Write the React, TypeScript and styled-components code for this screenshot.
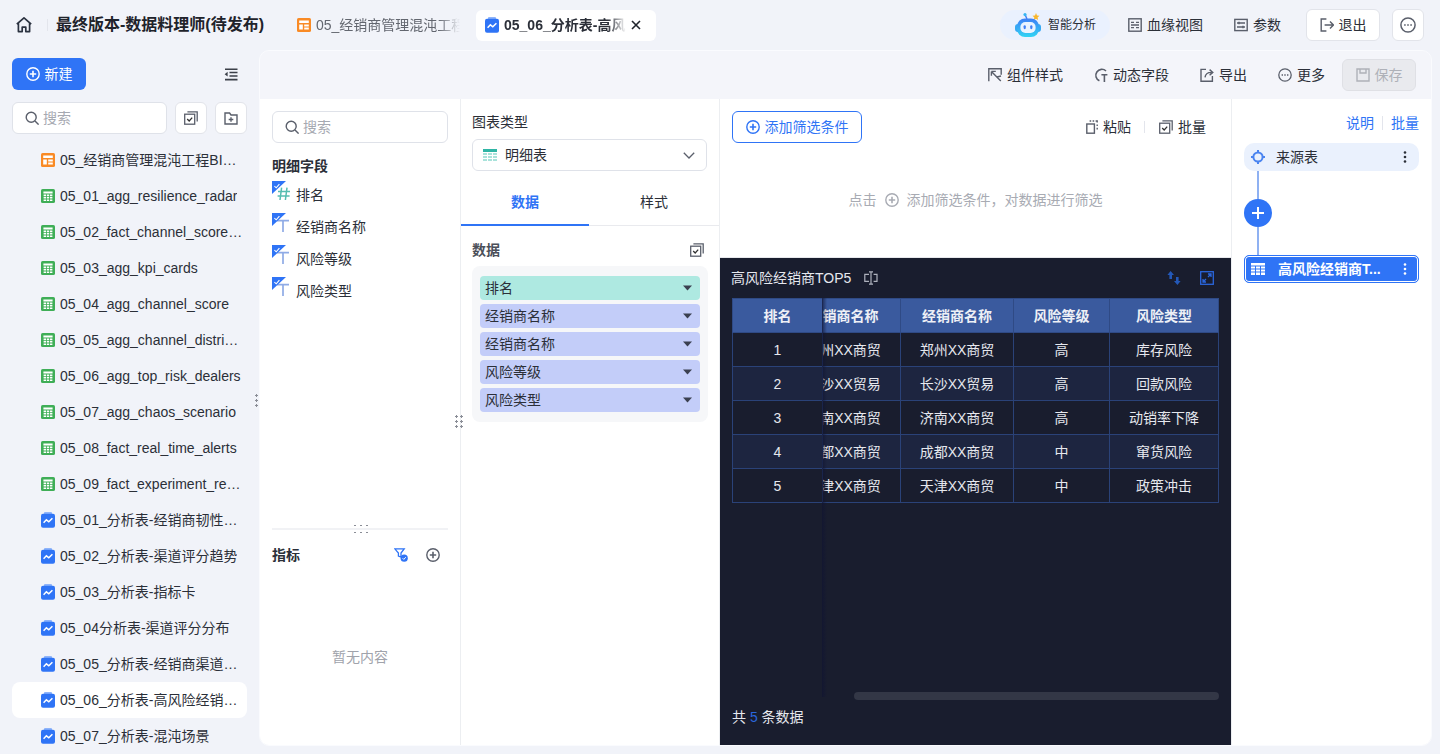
import React from "react";
import styled, { createGlobalStyle } from "styled-components";

const BLUE = "#2f74f6";

const GlobalStyle = createGlobalStyle`
  html, body {
    margin: 0;
    padding: 0;
    height: 754px;
    overflow: hidden;
    background: #f1f3f9;
    font-family: "Liberation Sans", "Noto Sans CJK SC", sans-serif;
    font-size: 14px;
    line-height: 20px;
    color: #2b2f38;
  }
  * { box-sizing: border-box; }
`;

/* ---------- icons ---------- */

type IconProps = { size?: number; color?: string };

const Line: React.FC<IconProps & { children: React.ReactNode }> = ({ size = 14, color = "#5a5f6b", children }) => (
  <svg width={size} height={size} viewBox={`0 0 ${size} ${size}`} fill="none" stroke={color} strokeWidth="1.4" style={{ flexShrink: 0 }}>
    {children}
  </svg>
);

const HomeIcon = () => (
  <svg width="18" height="18" viewBox="0 0 18 18" fill="none" stroke="#2b3240" strokeWidth="1.7" strokeLinejoin="round" style={{ flexShrink: 0 }}>
    <path d="M1.8 8.2 9 1.8l7.2 6.4M3.4 7v8.6h3.8v-4.4h3.6v4.4h3.8V7" />
  </svg>
);

const DashboardIcon = () => (
  <svg width="14" height="14" viewBox="0 0 14 14" style={{ flexShrink: 0 }}>
    <rect width="14" height="14" rx="1.6" fill="#f98a25" />
    <path d="M2.2 2.4h9.6v2.6H2.2zM2.2 6.4h3.6v5.2H2.2zM7.2 6.4h4.6v2H7.2zM7.2 9.6h4.6v2H7.2z" fill="#fff" />
  </svg>
);

const SheetIcon = () => (
  <svg width="14" height="14" viewBox="0 0 14 14" style={{ flexShrink: 0 }}>
    <rect width="14" height="14" rx="1.6" fill="#3fae57" />
    <path d="M2.4 2.4h9.2v2H2.4zM2.6 5.6h2.4v1.6H2.6zM5.8 5.6h2.4v1.6H5.8zM9 5.6h2.4v1.6H9zM2.6 8h2.4v1.6H2.6zM5.8 8h2.4v1.6H5.8zM9 8h2.4v1.6H9zM2.6 10.4h2.4V12H2.6zM5.8 10.4h2.4V12H5.8zM9 10.4h2.4V12H9z" fill="#fff" />
  </svg>
);

const AnalysisIcon = () => (
  <svg width="14" height="16" viewBox="0 0 14 16" style={{ flexShrink: 0 }}>
    <rect x="3" y="0" width="8" height="3" rx="1" fill="#8fb4fa" />
    <rect y="1.8" width="14" height="14" rx="2" fill={BLUE} />
    <path d="M2.6 10.8 5.4 7.8l2.4 2 3.6-3.6" fill="none" stroke="#fff" strokeWidth="1.5" />
  </svg>
);

const SearchIcon = () => (
  <Line>
    <circle cx="6.2" cy="6.2" r="5" />
    <path d="m10 10 3.6 3.6" />
  </Line>
);

const PlusCircle: React.FC<IconProps> = ({ size = 14, color = "#5a5f6b" }) => (
  <svg width={size} height={size} viewBox="0 0 14 14" fill="none" stroke={color} strokeWidth="1.4" style={{ flexShrink: 0 }}>
    <circle cx="7" cy="7" r="6.2" />
    <path d="M7 3.8v6.4M3.8 7h6.4" strokeWidth="1.6" />
  </svg>
);

const BatchIcon: React.FC<IconProps> = ({ size = 14 }) => (
  <svg width={size} height={size} viewBox="0 0 14 14" fill="none" stroke="#5a5f6b" strokeWidth="1.3" style={{ flexShrink: 0 }}>
    <rect x="0.7" y="3.2" width="10" height="10" />
    <path d="M3.4.8h9.8v9.6" />
    <path d="m3.2 8 2 2 3-3.4" stroke="#333" />
  </svg>
);

const FolderPlusIcon = () => (
  <Line>
    <path d="M1 2h4.6l1.4 2h6v9H1z" />
    <path d="M7 6.2v4.6M4.7 8.5h4.6" />
  </Line>
);

const CollapseIcon = () => (
  <svg width="14" height="13" viewBox="0 0 14 13" fill="none" stroke="#3b3f48" strokeWidth="1.6">
    <path d="M1 1.2h12.5M5.5 4.5h8M5.5 8h8M1 11.6h12.5" />
    <path d="M3.6 3.8v4.6L.6 6.2z" fill="#3b3f48" stroke="none" />
  </svg>
);

const CloseIcon = () => (
  <svg width="10" height="10" viewBox="0 0 10 10" stroke="#20242c" strokeWidth="1.6" style={{ flexShrink: 0 }}>
    <path d="m1 1 8 8M9 1 1 9" />
  </svg>
);

const RobotIcon = () => (
  <svg width="28" height="26" viewBox="0 0 28 26" style={{ flexShrink: 0 }}>
    <defs>
      <linearGradient id="robot" x1="0" y1="0" x2="0" y2="1">
        <stop offset="0" stopColor="#3f7ff6" />
        <stop offset="1" stopColor="#2fd4f4" />
      </linearGradient>
    </defs>
    <path d="M13 7 11.4 3.4" stroke="#3f7ff6" strokeWidth="1.4" fill="none" />
    <circle cx="11" cy="2.6" r="1.6" fill="#36b5f2" />
    <path d="m22 1 1 2.4 2.5.4-1.9 1.7.5 2.6-2.1-1.3-2.2 1.3.5-2.6-1.8-1.7 2.5-.4z" fill="#f9b62c" />
    <rect x="1" y="12" width="26" height="8" rx="3" fill="#35a9f4" />
    <rect x="3" y="6.4" width="22" height="18.6" rx="8" fill="url(#robot)" />
    <rect x="6.4" y="10" width="15.2" height="11" rx="5" fill="#eaf3ff" />
    <rect x="9.6" y="13.2" width="2.2" height="4" rx="1.1" fill="#3f7ff6" />
    <rect x="16.2" y="13.2" width="2.2" height="4" rx="1.1" fill="#3f7ff6" />
  </svg>
);

const LineageIcon = () => (
  <Line>
    <rect x=".8" y=".8" width="12.4" height="12.4" />
    <path d="M3 4.4h3M3 9.6h3M8 4.4h3M8 9.6h3M3 7h8" />
  </Line>
);

const ParamIcon = () => (
  <Line>
    <rect x=".8" y="1.4" width="12.4" height="11.2" />
    <path d="M3 5h8M3 9h8" />
    <path d="M5 3.8v2.4M9 7.8v2.4" />
  </Line>
);

const ExitIcon = () => (
  <Line>
    <path d="M6.4 1H1.2v12h5.2M4.6 7h8.6M10 3.6 13.4 7 10 10.4" />
  </Line>
);

const DotsCircle: React.FC<IconProps> = ({ size = 14 }) => (
  <svg width={size} height={size} viewBox="0 0 14 14" fill="none" stroke="#5a5f6b" strokeWidth="1.3" style={{ flexShrink: 0 }}>
    <circle cx="7" cy="7" r="6.2" />
    <path d="M3.6 7h1.4M6.3 7h1.4M9 7h1.4" strokeWidth="1.5" />
  </svg>
);

const StyleIcon = () => (
  <Line>
    <path d="M.8 13.2V.8h12.4v6" />
    <path d="M3.4 3.4 12.8 13M3.4 3.4h4.4M3.4 3.4v4.4" />
    <path d="M13 8 9 9" />
  </Line>
);

const DynamicIcon = () => (
  <Line>
    <path d="M12 3A6 6 0 1 0 5.4 12.8" strokeWidth="1.6" />
    <path d="M7.4 6.8h6M10.4 6.8V14" strokeWidth="1.6" />
  </Line>
);

const ExportIcon = () => (
  <Line>
    <path d="M6 1.4H1v11.8h11.4V8" />
    <path d="M5 9.4c.4-3.4 2.6-5 6.4-5M9.6 1.6l3.2 2.8-3.2 2.8" />
  </Line>
);

const SaveIcon = () => (
  <Line color="#aeb1b8">
    <path d="M1 1h12v12H1z" />
    <path d="M4 1v4h6V1" />
  </Line>
);

const PasteIcon = () => (
  <svg width="12" height="14" viewBox="0 0 12 14" fill="none" stroke="#5a5f6b" strokeWidth="1.4" style={{ flexShrink: 0 }}>
    <rect x=".8" y="4" width="7.6" height="9.2" />
    <path d="M3.6 1h1.6M6.6 1h1.6M9.6 1h1.6v1.6M11.2 4.4v1.6M11.2 7.8v1.6" />
  </svg>
);

const TableTypeIcon = () => (
  <svg width="14" height="12" viewBox="0 0 14 12" style={{ flexShrink: 0 }}>
    <rect width="14" height="3" fill="#2fb5a5" />
    <path d="M0 4h4v2H0zM5 4h4v2H5zM10 4h4v2h-4zM0 7h4v2H0zM5 7h4v2H5zM10 7h4v2h-4zM0 10h4v2H0zM5 10h4v2H5zM10 10h4v2h-4z" fill="#a9e3db" />
  </svg>
);

const ChevronIcon = () => (
  <svg width="12" height="7" viewBox="0 0 12 7" fill="none" stroke="#5a5f6b" strokeWidth="1.3">
    <path d="m.8.8 5.2 5.2L11.2.8" />
  </svg>
);

const Caret = () => (
  <svg width="9" height="6" viewBox="0 0 9 6" style={{ flexShrink: 0 }}>
    <path d="M0 .4h9L4.5 5.6z" fill="#3b4050" />
  </svg>
);

const FilterCheckIcon = () => (
  <svg width="14" height="14" viewBox="0 0 14 14" style={{ flexShrink: 0 }}>
    <path d="M.8.8h9.4L7 5v4L4.4 8V5z" fill="none" stroke={BLUE} strokeWidth="1.3" />
    <circle cx="10.2" cy="10.2" r="3.6" fill={BLUE} />
    <path d="m8.6 10.2 1.2 1.2 2-2.2" stroke="#fff" fill="none" strokeWidth="1" />
  </svg>
);

const RenameIcon = () => (
  <svg width="14" height="14" viewBox="0 0 14 14" fill="none" stroke="#aeb2bd" strokeWidth="1.2">
    <path d="M5 3.4H.8v7H5M9.6 3.4h3.4v7H9.6M5 .8h4M5 13.2h4M7 .8v12.4" />
  </svg>
);

const SwapIcon = () => (
  <svg width="14" height="14" viewBox="0 0 14 14" fill="#2358b8">
    <path d="M3.6 0 7 4H5v4H2.4V4H.4zM10.4 14 7 10h2V6h2.6v4h2z" />
  </svg>
);

const ExpandIcon = () => (
  <svg width="14" height="14" viewBox="0 0 14 14" fill="none" stroke="#2a66dc" strokeWidth="1.3">
    <rect x=".7" y=".7" width="12.6" height="12.6" />
    <path d="M8 3h3v3M11 3 8 6M6 11H3V8M3 11l3-3" />
  </svg>
);

const SourceIcon = () => (
  <svg width="14" height="14" viewBox="0 0 14 14" fill="none" stroke="#4a84f0" strokeWidth="2" style={{ flexShrink: 0 }}>
    <circle cx="7" cy="7" r="4.6" />
    <path d="M7 0v3M7 11v3M0 7h3M11 7h3" />
  </svg>
);

const WhiteTableIcon = () => (
  <svg width="14" height="12" viewBox="0 0 14 12" fill="#fff" style={{ flexShrink: 0 }}>
    <path d="M0 0h14v2.6H0zM0 3.6h4v2H0zM5 3.6h4v2H5zM10 3.6h4v2h-4zM0 6.6h4v2H0zM5 6.6h4v2H5zM10 6.6h4v2h-4zM0 9.6h4V12H0zM5 9.6h4V12H5zM10 9.6h4V12h-4z" />
  </svg>
);

const Kebab: React.FC<{ color: string }> = ({ color }) => (
  <svg width="4" height="12" viewBox="0 0 4 12" fill={color} style={{ flexShrink: 0 }}>
    <circle cx="2" cy="1.5" r="1.3" />
    <circle cx="2" cy="6" r="1.3" />
    <circle cx="2" cy="10.5" r="1.3" />
  </svg>
);

const FieldMark: React.FC<{ kind: "number" | "text" }> = ({ kind }) => (
  <svg width="18" height="20" viewBox="0 0 18 20" style={{ flexShrink: 0 }}>
    {kind === "number" ? (
      <path d="M9.6 6.6 8 19M15 6.6 13.4 19M6 10.6h12M5.6 15h12" stroke="#56bdb0" strokeWidth="1.5" fill="none" />
    ) : (
      <path d="M5 7.6h12M11 7.6V19" stroke="#8fabe6" strokeWidth="1.7" fill="none" />
    )}
    <path d="M0 0h14L0 13z" fill={BLUE} />
    <path d="m2.4 5.2 1.8 1.6 3.2-3.6" stroke="#fff" strokeWidth="1.1" fill="none" />
  </svg>
);

/* ---------- data ---------- */

const sideItems: { label: string; kind: "dash" | "sheet" | "chart"; active?: boolean }[] = [
  { label: "05_经销商管理混沌工程BI看板", kind: "dash" },
  { label: "05_01_agg_resilience_radar", kind: "sheet" },
  { label: "05_02_fact_channel_score_trend", kind: "sheet" },
  { label: "05_03_agg_kpi_cards", kind: "sheet" },
  { label: "05_04_agg_channel_score", kind: "sheet" },
  { label: "05_05_agg_channel_distribution", kind: "sheet" },
  { label: "05_06_agg_top_risk_dealers", kind: "sheet" },
  { label: "05_07_agg_chaos_scenario", kind: "sheet" },
  { label: "05_08_fact_real_time_alerts", kind: "sheet" },
  { label: "05_09_fact_experiment_records", kind: "sheet" },
  { label: "05_01_分析表-经销商韧性雷达图", kind: "chart" },
  { label: "05_02_分析表-渠道评分趋势", kind: "chart" },
  { label: "05_03_分析表-指标卡", kind: "chart" },
  { label: "05_04分析表-渠道评分分布", kind: "chart" },
  { label: "05_05_分析表-经销商渠道分布", kind: "chart" },
  { label: "05_06_分析表-高风险经销商TOP5", kind: "chart", active: true },
  { label: "05_07_分析表-混沌场景", kind: "chart" },
];

const fields: { label: string; kind: "number" | "text" }[] = [
  { label: "排名", kind: "number" },
  { label: "经销商名称", kind: "text" },
  { label: "风险等级", kind: "text" },
  { label: "风险类型", kind: "text" },
];

const pills: { label: string; teal?: boolean }[] = [
  { label: "排名", teal: true },
  { label: "经销商名称" },
  { label: "经销商名称" },
  { label: "风险等级" },
  { label: "风险类型" },
];

const columns = ["排名", "经销商名称", "经销商名称", "风险等级", "风险类型"];

const rows = [
  ["1", "郑州XX商贸", "郑州XX商贸", "高", "库存风险"],
  ["2", "长沙XX贸易", "长沙XX贸易", "高", "回款风险"],
  ["3", "济南XX商贸", "济南XX商贸", "高", "动销率下降"],
  ["4", "成都XX商贸", "成都XX商贸", "中", "窜货风险"],
  ["5", "天津XX商贸", "天津XX商贸", "中", "政策冲击"],
];

/* ---------- app ---------- */

const App: React.FC = () => {
  return (
    <Page>
      <GlobalStyle />
      <Header>
        <HomeIcon />
        <HeaderDivider />
        <AppTitle>最终版本-数据料理师(待发布)</AppTitle>
        <Tab>
          <DashboardIcon />
          <TabLabel>05_经销商管理混沌工程BI看板</TabLabel>
        </Tab>
        <Tab $active>
          <AnalysisIcon />
          <TabLabel $active>05_06_分析表-高风险经销商TOP5</TabLabel>
          <CloseIcon />
        </Tab>
        <HeaderActions>
          <AiPill>
            <RobotIcon />
            智能分析
          </AiPill>
          <HeaderLinks>
            <ActionItem><LineageIcon />血缘视图</ActionItem>
            <ActionItem><ParamIcon />参数</ActionItem>
          </HeaderLinks>
          <ExitButton><ExitIcon />退出</ExitButton>
          <MoreButton><DotsCircle size={16} /></MoreButton>
        </HeaderActions>
      </Header>

      <Content>
        <Sidebar>
          <SideTop>
            <NewButton><PlusCircle color="#fff" />新建</NewButton>
            <CollapseIcon />
          </SideTop>
          <SideSearchRow>
            <SearchBox><SearchIcon />搜索</SearchBox>
            <SquareButton><BatchIcon /></SquareButton>
            <SquareButton><FolderPlusIcon /></SquareButton>
          </SideSearchRow>
          <SideList>
            {sideItems.map((item, index) => (
              <SideRow key={index} $active={item.active}>
                {item.kind === "dash" && <DashboardIcon />}
                {item.kind === "sheet" && <SheetIcon />}
                {item.kind === "chart" && <AnalysisIcon />}
                <SideLabel>{item.label}</SideLabel>
              </SideRow>
            ))}
          </SideList>
          <SideGrip />
        </Sidebar>

        <Main>
          <Toolbar>
            <ActionItem><StyleIcon />组件样式</ActionItem>
            <ActionItem><DynamicIcon />动态字段</ActionItem>
            <ActionItem><ExportIcon />导出</ActionItem>
            <ActionItem><DotsCircle />更多</ActionItem>
            <SaveButton><SaveIcon />保存</SaveButton>
          </Toolbar>

          <Workspace>
            <FieldColumn>
              <SearchBox $wide><SearchIcon />搜索</SearchBox>
              <SectionTitle>明细字段</SectionTitle>
              <FieldList>
                {fields.map((field) => (
                  <FieldRow key={field.label}>
                    <FieldMark kind={field.kind} />
                    <FieldName>{field.label}</FieldName>
                  </FieldRow>
                ))}
              </FieldList>
              <FieldSpacer />
              <Divider><DividerGrip /></Divider>
              <MetricHead>
                <SectionTitle $flat>指标</SectionTitle>
                <MetricIcons>
                  <FilterCheckIcon />
                  <PlusCircle />
                </MetricIcons>
              </MetricHead>
              <EmptyNote>暂无内容</EmptyNote>
              <ColumnGrip />
            </FieldColumn>

            <ConfigColumn>
              <ConfigTop>
                <ConfigLabel>图表类型</ConfigLabel>
                <SelectBox>
                  <TableTypeIcon />
                  <SelectText>明细表</SelectText>
                  <ChevronIcon />
                </SelectBox>
              </ConfigTop>
              <Tabs>
                <TabButton $active>数据</TabButton>
                <TabButton>样式</TabButton>
              </Tabs>
              <DataSection>
                <DataHead>
                  <span>数据</span>
                  <BatchIcon />
                </DataHead>
                <PillWell>
                  {pills.map((pill, index) => (
                    <Pill key={index} $teal={pill.teal}>
                      {pill.label}
                      <Caret />
                    </Pill>
                  ))}
                </PillWell>
              </DataSection>
            </ConfigColumn>

            <CenterColumn>
              <FilterArea>
                <FilterBar>
                  <AddFilterButton><PlusCircle color={BLUE} />添加筛选条件</AddFilterButton>
                  <FilterTools>
                    <ActionItem><PasteIcon />粘贴</ActionItem>
                    <ToolDivider />
                    <ActionItem><BatchIcon />批量</ActionItem>
                  </FilterTools>
                </FilterBar>
                <FilterHint>
                  点击
                  <PlusCircle color="#a8abb3" />
                  添加筛选条件，对数据进行筛选
                </FilterHint>
              </FilterArea>

              <DarkPanel>
                <DarkHead>
                  <DarkTitle>高风险经销商TOP5<RenameIcon /></DarkTitle>
                  <DarkTools>
                    <SwapIcon />
                    <ExpandIcon />
                  </DarkTools>
                </DarkHead>
                <TableArea>
                  <DataTable>
                    <colgroup>
                      <col width={90} />
                      <col width={78} />
                      <col width={113} />
                      <col width={96} />
                      <col width={109} />
                    </colgroup>
                    <thead>
                      <tr>
                        {columns.map((name, index) => (
                          <HeadCell key={index}>
                            {index === 1 ? <Scrolled>{name}</Scrolled> : name}
                          </HeadCell>
                        ))}
                      </tr>
                    </thead>
                    <tbody>
                      {rows.map((row) => (
                        <BodyRow key={row[0]}>
                          {row.map((value, index) => (
                            <BodyCell key={index}>
                              {index === 1 ? <Scrolled>{value}</Scrolled> : value}
                            </BodyCell>
                          ))}
                        </BodyRow>
                      ))}
                    </tbody>
                  </DataTable>
                  <FixedShade />
                  <ScrollTrack />
                </TableArea>
                <DarkFoot>共 <Count>5</Count> 条数据</DarkFoot>
              </DarkPanel>
            </CenterColumn>

            <FlowColumn>
              <FlowLinks>
                <FlowLink>说明</FlowLink>
                <FlowLinkDivider />
                <FlowLink>批量</FlowLink>
              </FlowLinks>
              <SourceNode>
                <SourceIcon />
                <NodeText>来源表</NodeText>
                <Kebab color="#2b2f38" />
              </SourceNode>
              <Connector />
              <AddNode>
                <svg width="14" height="14" viewBox="0 0 14 14" stroke="#fff" strokeWidth="2">
                  <path d="M7 1v12M1 7h12" />
                </svg>
              </AddNode>
              <Connector />
              <TableNode>
                <WhiteTableIcon />
                <NodeText $strong>高风险经销商T...</NodeText>
                <Kebab color="#fff" />
              </TableNode>
            </FlowColumn>
          </Workspace>
        </Main>
      </Content>
    </Page>
  );
};

/* ---------- page ---------- */

const Page = styled.div`
  width: 1440px;
  height: 754px;
  display: flex;
  flex-direction: column;
  overflow: hidden;
`;

const Header = styled.header`
  height: 50px;
  flex-shrink: 0;
  display: flex;
  align-items: center;
  padding: 0 16px 0 15px;
`;

const HeaderDivider = styled.div`
  width: 1px;
  height: 12px;
  margin: 0 8px 0 14px;
  background: #e3e5ec;
`;

const AppTitle = styled.div`
  width: 232px;
  font-size: 16px;
  line-height: 24px;
  font-weight: 700;
  color: #1f232b;
  white-space: nowrap;
`;

const Tab = styled.div<{ $active?: boolean }>`
  width: 180px;
  height: 31px;
  margin-right: 8px;
  padding: 0 ${(p) => (p.$active ? "15px" : "8px")} 0 9px;
  display: flex;
  align-items: center;
  gap: 5px;
  border-radius: 6px;
  background: ${(p) => (p.$active ? "#fff" : "transparent")};
`;

const TabLabel = styled.div<{ $active?: boolean }>`
  flex: 1;
  min-width: 0;
  overflow: hidden;
  white-space: nowrap;
  color: ${(p) => (p.$active ? "#2b2f38" : "#62666f")};
  font-weight: ${(p) => (p.$active ? 700 : 400)};
  mask-image: linear-gradient(to right, #000 85%, transparent);
`;

const HeaderActions = styled.div`
  margin-left: auto;
  display: flex;
  align-items: center;
`;

const AiPill = styled.div`
  width: 110px;
  height: 30px;
  margin-right: 18px;
  padding-left: 14px;
  display: flex;
  align-items: center;
  gap: 6px;
  border-radius: 15px;
  background: #eaf1fe;
  font-size: 12px;
`;

const HeaderLinks = styled.div`
  display: flex;
  align-items: center;
  gap: 31px;
  margin-right: 25px;
`;

const ActionItem = styled.div`
  display: flex;
  align-items: center;
  gap: 5px;
  white-space: nowrap;
`;

const ExitButton = styled.div`
  width: 74px;
  height: 32px;
  margin-right: 12px;
  display: flex;
  align-items: center;
  justify-content: center;
  gap: 5px;
  background: #fff;
  border: 1px solid #e2e4ea;
  border-radius: 6px;
`;

const MoreButton = styled.div`
  width: 32px;
  height: 32px;
  display: flex;
  align-items: center;
  justify-content: center;
  background: #fff;
  border: 1px solid #e2e4ea;
  border-radius: 6px;
`;

const Content = styled.div`
  flex: 1;
  min-height: 0;
  display: flex;
`;

/* ---------- sidebar ---------- */

const Sidebar = styled.aside`
  position: relative;
  width: 259px;
  flex-shrink: 0;
  padding: 8px 12px 0;
`;

const SideTop = styled.div`
  height: 32px;
  display: flex;
  align-items: center;
  justify-content: space-between;
  padding-right: 9px;
`;

const NewButton = styled.div`
  width: 74px;
  height: 32px;
  display: flex;
  align-items: center;
  justify-content: center;
  gap: 5px;
  border-radius: 6px;
  background: ${BLUE};
  color: #fff;
`;

const SideSearchRow = styled.div`
  margin-top: 12px;
  display: flex;
  gap: 8px;
`;

const SearchBox = styled.div<{ $wide?: boolean }>`
  width: ${(p) => (p.$wide ? "176px" : "155px")};
  height: 32px;
  padding-left: 12px;
  display: flex;
  align-items: center;
  gap: 4px;
  flex-shrink: 0;
  background: #fff;
  border: 1px solid #dfe2e9;
  border-radius: 6px;
  color: #a6a9b1;
`;

const SquareButton = styled.div`
  width: 32px;
  height: 32px;
  display: flex;
  align-items: center;
  justify-content: center;
  background: #fff;
  border: 1px solid #e2e4ea;
  border-radius: 6px;
`;

const SideList = styled.div`
  margin-top: 8px;
`;

const SideRow = styled.div<{ $active?: boolean }>`
  height: 36px;
  padding: 0 3px 0 29px;
  display: flex;
  align-items: center;
  gap: 5px;
  border-radius: 8px;
  background: ${(p) => (p.$active ? "#fff" : "transparent")};
`;

const SideLabel = styled.div`
  min-width: 0;
  overflow: hidden;
  white-space: nowrap;
  text-overflow: ellipsis;
`;

const SideGrip = styled.div`
  position: absolute;
  right: 1px;
  top: 343px;
  width: 3px;
  height: 15px;
  background-image: radial-gradient(circle, #8a8d96 1px, transparent 1.2px);
  background-size: 3px 5px;
`;

/* ---------- main ---------- */

const Main = styled.main`
  width: 1173px;
  height: 696px;
  display: flex;
  flex-direction: column;
  overflow: hidden;
  border-radius: 10px;
  border: 1px solid #fafbfe;
  background: #f4f5fa;
`;

const Toolbar = styled.div`
  height: 48px;
  flex-shrink: 0;
  display: flex;
  align-items: center;
  justify-content: flex-end;
  gap: 31px;
  padding-right: 15px;
`;

const SaveButton = styled.div`
  width: 74px;
  height: 32px;
  margin-left: -14px;
  display: flex;
  align-items: center;
  justify-content: center;
  gap: 5px;
  border: 1px solid #dfe0e5;
  border-radius: 6px;
  background: #e9eaee;
  color: #aeb1b8;
`;

const Workspace = styled.div`
  flex: 1;
  min-height: 0;
  display: grid;
  grid-template-columns: 200px 260px 511px 1fr;
  background: #fff;
`;

const FieldColumn = styled.section`
  position: relative;
  padding: 12px 12px 0;
  display: flex;
  flex-direction: column;
`;

const SectionTitle = styled.div<{ $flat?: boolean }>`
  margin-top: ${(p) => (p.$flat ? "0" : "13px")};
  font-weight: 700;
`;

const FieldList = styled.div`
  display: flex;
  flex-direction: column;
  gap: 12px;
  margin-top: 5px;
`;

const FieldRow = styled.div`
  height: 20px;
  display: flex;
  align-items: flex-start;
  gap: 6px;
`;

const FieldName = styled.span`
  margin-top: 4px;
`;

const FieldSpacer = styled.div`
  flex: 1;
`;

const Divider = styled.div`
  position: relative;
  height: 2px;
  flex-shrink: 0;
  background: #f1f2f5;
`;

const DividerGrip = styled.div`
  position: absolute;
  left: 80px;
  top: -6px;
  width: 18px;
  height: 14px;
  background-image: radial-gradient(circle, #8a8d96 .9px, transparent 1.1px);
  background-size: 6px 7px;
`;

const MetricHead = styled.div`
  height: 50px;
  flex-shrink: 0;
  display: flex;
  align-items: center;
  justify-content: space-between;
  padding-right: 8px;
`;

const MetricIcons = styled.div`
  display: flex;
  align-items: center;
  gap: 18px;
`;

const EmptyNote = styled.div`
  height: 165px;
  flex-shrink: 0;
  padding-top: 67px;
  text-align: center;
  color: #a0a3ab;
`;

const ColumnGrip = styled.div`
  position: absolute;
  right: -4px;
  top: 315px;
  width: 10px;
  height: 15px;
  background-image: radial-gradient(circle, #8a8d96 1px, transparent 1.2px);
  background-size: 5px 5px;
`;

const ConfigColumn = styled.section`
  border-left: 1px solid #eceef1;
  border-right: 1px solid #eceef1;
  display: flex;
  flex-direction: column;
`;

const ConfigTop = styled.div`
  padding: 13px 12px 0 11px;
`;

const ConfigLabel = styled.div``;

const SelectBox = styled.div`
  height: 32px;
  margin-top: 7px;
  padding: 0 11px 0 10px;
  display: flex;
  align-items: center;
  gap: 8px;
  border: 1px solid #dfe2e9;
  border-radius: 6px;
`;

const SelectText = styled.span`
  flex: 1;
`;

const Tabs = styled.div`
  height: 55px;
  display: flex;
  border-bottom: 1px solid #e9eaee;
`;

const TabButton = styled.div<{ $active?: boolean }>`
  flex: ${(p) => (p.$active ? "0 0 128px" : "1")};
  display: flex;
  align-items: center;
  justify-content: center;
  padding-top: 9px;
  margin-bottom: -1px;
  color: ${(p) => (p.$active ? BLUE : "#2b2f38")};
  font-weight: ${(p) => (p.$active ? 700 : 400)};
  border-bottom: 2px solid ${(p) => (p.$active ? BLUE : "transparent")};
`;

const DataSection = styled.div`
  padding: 14px 11px 0 11px;
`;

const DataHead = styled.div`
  height: 20px;
  padding-right: 4px;
  display: flex;
  align-items: center;
  justify-content: space-between;
  color: #4b4f59;
  font-weight: 700;
`;

const PillWell = styled.div`
  margin-top: 6px;
  padding: 10px 8px;
  display: flex;
  flex-direction: column;
  gap: 4px;
  border-radius: 8px;
  background: #f6f7f9;
`;

const Pill = styled.div<{ $teal?: boolean }>`
  height: 24px;
  padding: 0 8px 0 5px;
  display: flex;
  align-items: center;
  justify-content: space-between;
  border-radius: 4px;
  background: ${(p) => (p.$teal ? "#aee9e1" : "#c3cdf9")};
`;

const CenterColumn = styled.section`
  display: flex;
  flex-direction: column;
  min-height: 0;
`;

const FilterArea = styled.div`
  height: 159px;
  flex-shrink: 0;
  padding: 12px 12px 0;
  border-bottom: 1px solid #e7e8ec;
`;

const FilterBar = styled.div`
  display: flex;
  align-items: center;
  justify-content: space-between;
`;

const AddFilterButton = styled.div`
  width: 130px;
  height: 32px;
  display: flex;
  align-items: center;
  justify-content: center;
  gap: 5px;
  border: 1px solid ${BLUE};
  border-radius: 6px;
  color: ${BLUE};
`;

const FilterTools = styled.div`
  display: flex;
  align-items: center;
  gap: 14px;
  padding-right: 13px;
`;

const ToolDivider = styled.div`
  width: 1px;
  height: 12px;
  margin-left: -1px;
  background: #e3e5ec;
`;

const FilterHint = styled.div`
  margin-top: 47px;
  display: flex;
  align-items: center;
  justify-content: center;
  gap: 8px;
  color: #a8abb3;
`;

const DarkPanel = styled.div`
  flex: 1;
  min-height: 0;
  padding: 0 12px;
  display: flex;
  flex-direction: column;
  background: #191d2e;
  color: #e6e8ee;
`;

const DarkHead = styled.div`
  height: 40px;
  flex-shrink: 0;
  display: flex;
  align-items: center;
  justify-content: space-between;
  padding-right: 5px;
`;

const DarkTitle = styled.div`
  margin-left: -1px;
  display: flex;
  align-items: center;
  gap: 13px;
`;

const DarkTools = styled.div`
  display: flex;
  align-items: center;
  gap: 19px;
`;

const TableArea = styled.div`
  position: relative;
  flex: 1;
  min-height: 0;
  display: flex;
  flex-direction: column;
  justify-content: space-between;
`;

const DataTable = styled.table`
  width: 486px;
  table-layout: fixed;
  border-collapse: collapse;
  border: 1px solid #2a4278;
`;

const HeadCell = styled.th`
  height: 34px;
  padding: 0;
  overflow: hidden;
  background: #3a5a9e;
  border: 1px solid #2f4a85;
  color: #eef0f6;
  font-weight: 700;
  white-space: nowrap;
`;

const BodyRow = styled.tr`
  &:nth-child(even) td {
    background: #1d2540;
  }
`;

const BodyCell = styled.td`
  height: 34px;
  padding: 0;
  overflow: hidden;
  text-align: center;
  white-space: nowrap;
  border: 1px solid #2a4278;
`;

const Scrolled = styled.span`
  display: block;
  width: 113px;
  margin-left: -36px;
  text-align: center;
`;

const FixedShade = styled.div`
  position: absolute;
  left: 90px;
  top: 0;
  bottom: 3px;
  width: 5px;
  background: linear-gradient(to right, rgba(16, 20, 50, 0.7), rgba(16, 20, 50, 0));
`;

const ScrollTrack = styled.div`
  height: 8px;
  margin-left: 122px;
  flex-shrink: 0;
  border-radius: 4px;
  background: #333746;
`;

const DarkFoot = styled.div`
  height: 45px;
  flex-shrink: 0;
  padding-top: 7px;
  white-space: pre;
`;

const Count = styled.span`
  color: #2a66dc;
`;

/* ---------- flow ---------- */

const FlowColumn = styled.section`
  border-left: 1px solid #eceef1;
  padding: 14px 12px 0 12px;
  display: flex;
  flex-direction: column;
  align-items: flex-start;
`;

const FlowLinks = styled.div`
  width: 100%;
  height: 20px;
  margin-bottom: 10px;
  display: flex;
  align-items: center;
  justify-content: flex-end;
  gap: 8px;
`;

const FlowLink = styled.span`
  color: ${BLUE};
`;

const FlowLinkDivider = styled.div`
  width: 1px;
  height: 14px;
  background: #e3e5ec;
`;

const SourceNode = styled.div`
  width: 175px;
  height: 28px;
  padding: 0 12px 0 7px;
  display: flex;
  align-items: center;
  border-radius: 10px;
  background: #eaf1fd;
`;

const NodeText = styled.span<{ $strong?: boolean }>`
  flex: 1;
  margin-left: ${(p) => (p.$strong ? "13px" : "11px")};
  color: ${(p) => (p.$strong ? "#fff" : "#2b2f38")};
  font-weight: ${(p) => (p.$strong ? 700 : 400)};
  white-space: nowrap;
`;

const Connector = styled.div`
  width: 2px;
  height: 28px;
  margin-left: 13px;
  background: #8fb1f2;
`;

const AddNode = styled.div`
  width: 28px;
  height: 28px;
  display: flex;
  align-items: center;
  justify-content: center;
  border-radius: 50%;
  background: ${BLUE};
`;

const TableNode = styled.div`
  width: 175px;
  height: 28px;
  padding: 0 11px 0 6px;
  display: flex;
  align-items: center;
  border-radius: 5px;
  background: ${BLUE};
  border: 1px solid ${BLUE};
  box-shadow: inset 0 0 0 1px #fff;
`;

export default App;
